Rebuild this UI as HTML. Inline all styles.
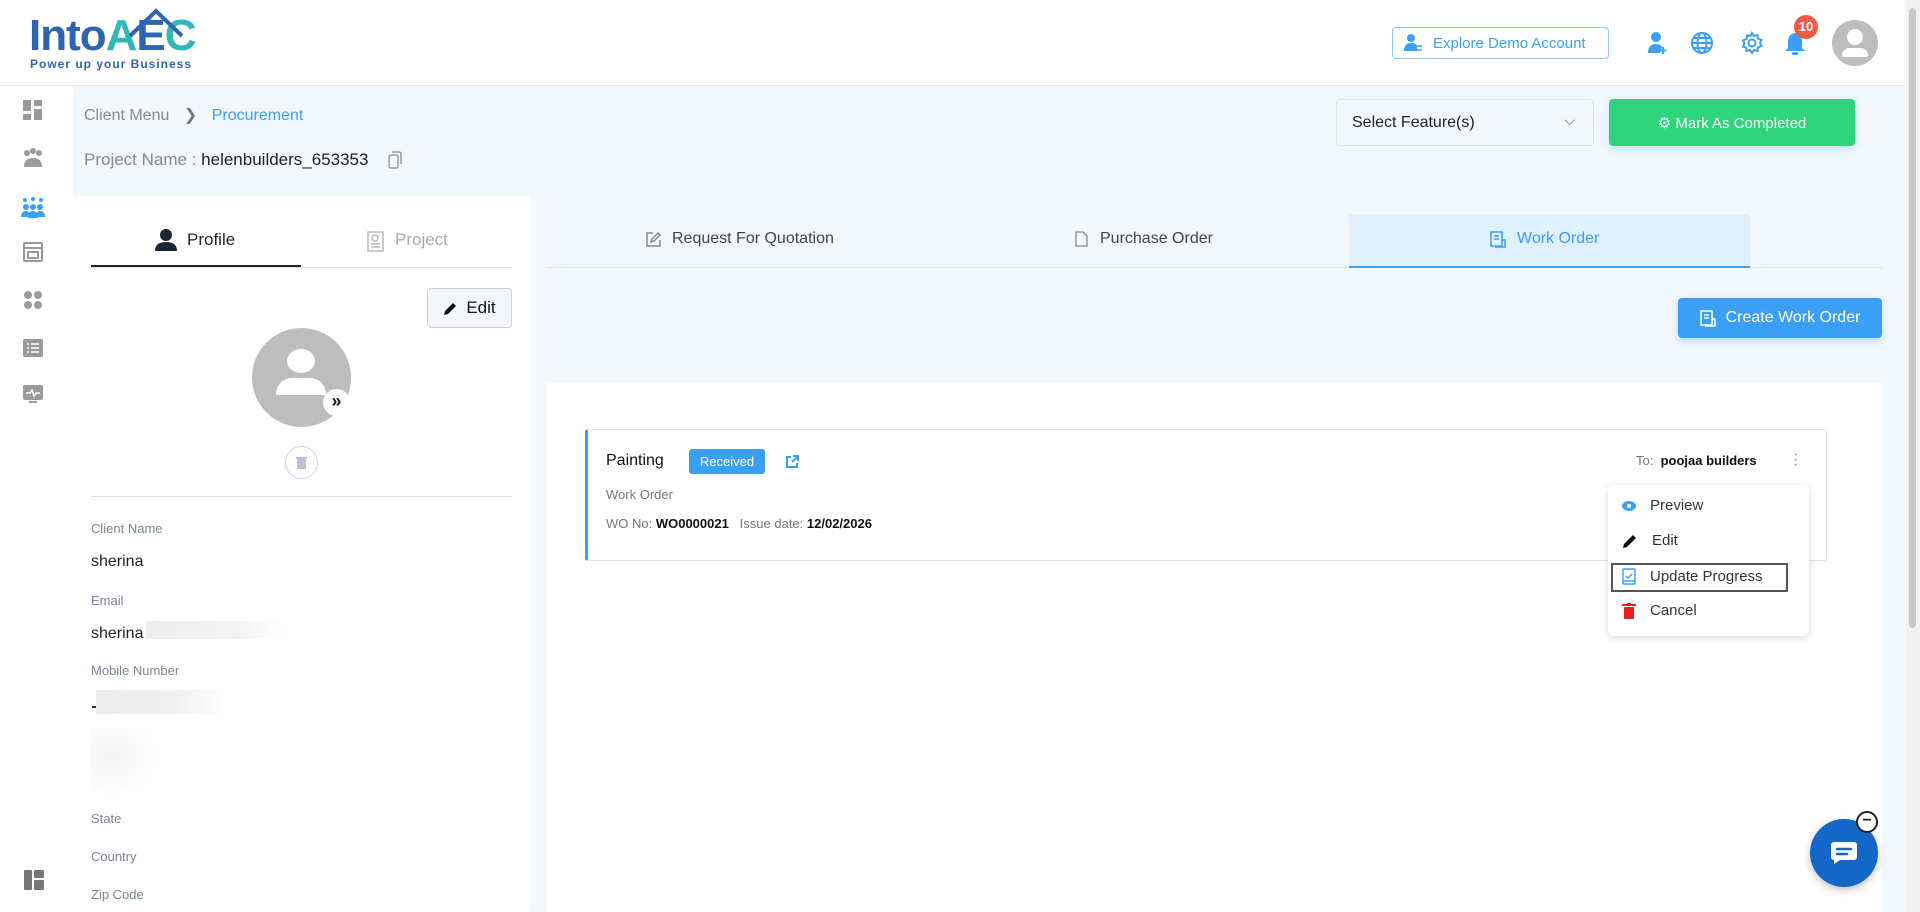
<!DOCTYPE html>
<html><head><meta charset="utf-8">
<style>
*{box-sizing:border-box;margin:0;padding:0}
body{width:1920px;height:912px;overflow:hidden;background:#f3f8fd;font-family:"Liberation Sans",Arial,sans-serif;position:relative;color:#222}
.a{position:absolute}
.hdr{left:0;top:0;width:1904px;height:86px;background:#fff;border-bottom:1px solid #e3e9f0}
.side{left:0;top:86px;width:73px;height:826px;background:#fff}
.lbl{font-size:13px;color:#7a8699;left:91px}
.val{font-size:16px;color:#222;left:91px}
.tab{font-size:16px;color:#444;top:230px}
.mi{left:1622px;font-size:15px;color:#333;display:flex;align-items:center;gap:14px}
</style></head><body>
<div class="a hdr"></div>
<div class="a" style="left:29px;top:14px;font-size:44px;font-weight:bold;color:#2f64b0;letter-spacing:-1px;line-height:44px">Into<span style="color:#2fb9b9">A</span><span style="color:#2f64b0">E</span><span style="color:#2fb9b9">C</span></div>
<svg class="a" style="left:128px;top:8px" width="56" height="30"><path d="M2 28 L28 3 L54 28" fill="none" stroke="#2f64b0" stroke-width="4"/></svg>
<div class="a" style="left:30px;top:57px;font-size:12px;font-weight:bold;color:#2f64b0;letter-spacing:1px">Power up your Business</div>
<div class="a" style="left:1392px;top:27px;width:217px;height:32px;border:1px solid #8cc4f5;border-radius:4px;color:#3a9ff5;font-size:15px;display:flex;align-items:center;padding-left:10px;gap:10px">
<svg width="20" height="20"><circle cx="8" cy="5" r="4" fill="#3a9ff5"/><path d="M1 18 Q1 10 8 10 Q13 10 14 13 L14 18Z" fill="#3a9ff5"/><path d="M14 13h5M14 17h5" stroke="#3a9ff5" stroke-width="1.5"/></svg>Explore Demo Account</div>
<svg class="a" style="left:1646px;top:31px" width="24" height="24"><circle cx="10" cy="6" r="5" fill="#3a9ff5"/><path d="M2 22 Q2 13 10 13 Q15 13 16 16 L14 22Z" fill="#3a9ff5"/><path d="M17 16v7M13.5 19.5h7" stroke="#3a9ff5" stroke-width="2"/></svg>
<svg class="a" style="left:1690px;top:31px" width="24" height="24" fill="none" stroke="#3a9ff5" stroke-width="2"><circle cx="12" cy="12" r="10"/><ellipse cx="12" cy="12" rx="4.5" ry="10"/><path d="M2 12h20M4 7h16M4 17h16"/></svg>
<svg class="a" style="left:1740px;top:31px" width="24" height="24" fill="none" stroke="#3a9ff5" stroke-width="2"><circle cx="12" cy="12" r="3.5"/><path d="M12 2l2 3 3.5-1 .5 3.5 3.5 1.5-1.5 3 1.5 3-3.5 1.5-.5 3.5-3.5-1-2 3-2-3-3.5 1-.5-3.5L3 15.5l1.5-3L3 9.5 6.5 8 7 4.5 10.5 5z"/></svg>
<svg class="a" style="left:1784px;top:31px" width="22" height="26"><path d="M11 2 Q4 3 4 11 L4 17 L1 20 L21 20 L18 17 L18 11 Q18 3 11 2Z" fill="#3a9ff5"/><rect x="8" y="21" width="6" height="3" rx="1.5" fill="#3a9ff5"/></svg>
<div class="a" style="left:1794px;top:15px;width:24px;height:24px;border-radius:50%;background:#f05a4a;color:#fff;font-size:13px;font-weight:bold;text-align:center;line-height:24px">10</div>
<div class="a" style="left:1832px;top:20px;width:46px;height:46px;border-radius:50%;background:#bdbdbd;overflow:hidden"><div class="a" style="left:15px;top:9px;width:16px;height:16px;border-radius:50%;background:#fff"></div><div class="a" style="left:10px;top:28px;width:26px;height:9px;border-radius:9px 9px 2px 2px;background:#fff"></div></div>
<div class="a" style="left:1906px;top:0;width:14px;height:912px;background:#f1f1f1"><div class="a" style="left:3px;top:8px;width:7px;height:620px;background:#c9c9c9;border-radius:4px"></div></div>
<div class="a side"></div>
<svg class="a" style="left:23px;top:100px" width="20" height="20" fill="#9a9a9a"><rect x="0" y="0" width="8" height="11"/><rect x="11" y="0" width="8" height="6"/><rect x="0" y="14" width="8" height="6"/><rect x="11" y="9" width="8" height="11"/></svg>
<svg class="a" style="left:22px;top:147px" width="22" height="22" fill="#9a9a9a"><circle cx="5" cy="6" r="3"/><circle cx="11" cy="4" r="3"/><circle cx="17" cy="6" r="3"/><path d="M2 20 Q2 11 11 11 Q20 11 20 20Z"/></svg>
<svg class="a" style="left:21px;top:197px" width="24" height="22" fill="#3a9ff5"><circle cx="4" cy="3" r="2"/><circle cx="12" cy="2" r="2"/><circle cx="20" cy="3" r="2"/><circle cx="5" cy="10" r="3"/><circle cx="12" cy="10" r="3"/><circle cx="19" cy="10" r="3"/><path d="M0 20 Q0 14 5 14 Q9 14 9 20Z M7 21 Q7 14 12 14 Q17 14 17 21Z M15 20 Q15 14 19 14 Q24 14 24 20Z"/></svg>
<svg class="a" style="left:23px;top:242px" width="20" height="20" fill="none" stroke="#9a9a9a" stroke-width="2"><rect x="1" y="1" width="18" height="18" rx="1"/><path d="M1 6h18M5 10h10v6H5z"/></svg>
<svg class="a" style="left:23px;top:290px" width="20" height="20" fill="#9a9a9a"><circle cx="5" cy="5" r="4"/><circle cx="15" cy="5" r="4"/><circle cx="5" cy="15" r="4"/><circle cx="15" cy="15" r="4"/></svg>
<svg class="a" style="left:23px;top:339px" width="20" height="18" fill="#9a9a9a"><rect width="20" height="18" rx="2"/><path d="M4 5h2M8 5h8M4 9h2M8 9h8M4 13h2M8 13h8" stroke="#fff" stroke-width="1.5"/></svg>
<svg class="a" style="left:23px;top:385px" width="20" height="18" fill="#9a9a9a"><rect width="20" height="15" rx="2"/><path d="M3 8h4l2-3 2 6 2-3h4" stroke="#fff" stroke-width="1.5" fill="none"/><rect x="6" y="16" width="8" height="2"/></svg>
<svg class="a" style="left:24px;top:870px" width="20" height="20" fill="#777"><rect width="8" height="20" rx="1"/><rect x="10" width="10" height="8" rx="1"/><rect x="10" y="10" width="10" height="10" rx="1"/></svg>
<div class="a" style="left:84px;top:105px;font-size:16px;color:#888">Client Menu <span style="margin:0 10px;color:#777">&#x276F;</span> <span style="color:#3a9ff5">Procurement</span></div>
<div class="a" style="left:84px;top:150px;font-size:17px;color:#888">Project Name : <span style="color:#222">helenbuilders_653353</span></div>
<svg class="a" style="left:388px;top:151px" width="14" height="18" fill="none" stroke="#999" stroke-width="1.5"><rect x="1" y="4" width="9" height="13" rx="2"/><path d="M4 1h7a2 2 0 0 1 2 2v10"/></svg>
<div class="a" style="left:1336px;top:99px;width:258px;height:47px;border:1px solid #dbe4ee;border-radius:4px;background:#f3f8fd;font-size:16px;color:#222;padding:14px 15px">Select Feature(s)<span class="a" style="right:18px;top:12px;color:#666;font-size:14px">&#x2335;</span></div>
<div class="a" style="left:1609px;top:99px;width:246px;height:47px;border-radius:4px;background:#2fd47d;color:#fff;font-size:15px;display:flex;align-items:center;justify-content:center;gap:6px;box-shadow:0 4px 10px rgba(47,150,240,.2)">&#x2699; Mark As Completed</div>
<div class="a" style="left:73px;top:196px;width:457px;height:716px;background:#fff;border-radius:4px"></div>
<svg class="a" style="left:155px;top:229px" width="22" height="22" fill="#1c2533"><circle cx="11" cy="6" r="6"/><path d="M0 22 Q0 13 11 13 Q22 13 22 22Z"/></svg>
<div class="a" style="left:187px;top:230px;font-size:17px;color:#1c2533">Profile</div>
<svg class="a" style="left:365px;top:230px" width="20" height="22" fill="none" stroke="#bbb" stroke-width="1.5"><rect x="3" y="2" width="15" height="19"/><circle cx="10" cy="8" r="3"/><path d="M6 14h9M6 17h9"/></svg>
<div class="a" style="left:395px;top:230px;font-size:17px;color:#aaa">Project</div>
<div class="a" style="left:91px;top:267px;width:421px;height:1px;background:#e2e2e2"></div>
<div class="a" style="left:91px;top:265px;width:210px;height:2px;background:#1c2533"></div>
<div class="a" style="left:427px;top:288px;width:85px;height:40px;border:1px solid #c9d3df;border-radius:4px;background:#f3f6fa;font-size:17px;color:#111;display:flex;align-items:center;justify-content:center;gap:8px"><svg width="15" height="15"><path d="M1 14 L2 10 L10 2 L13 5 L5 13Z" fill="#111"/></svg>Edit</div>
<div class="a" style="left:252px;top:328px;width:99px;height:99px;border-radius:50%;background:#bdbdbd;overflow:hidden"><div class="a" style="left:35px;top:21px;width:28px;height:24px;border-radius:50%;background:#fff"></div><div class="a" style="left:24px;top:50px;width:50px;height:17px;border-radius:16px 16px 0 0;background:#fff"></div></div>
<div class="a" style="left:323px;top:389px;width:27px;height:27px;border-radius:50%;background:#fff;text-align:center;line-height:25px;font-size:18px;font-weight:bold;color:#111">&#187;</div>
<div class="a" style="left:285px;top:446px;width:33px;height:33px;border-radius:50%;border:1px solid #cdd6e6;display:flex;align-items:center;justify-content:center"><svg width="11" height="13" fill="#b7c3d6"><rect x="0" y="1" width="11" height="2"/><rect x="1" y="3" width="9" height="10" rx="1"/></svg></div>
<div class="a" style="left:91px;top:496px;width:421px;height:1px;background:#ddd"></div>
<div class="a lbl" style="top:521px">Client Name</div>
<div class="a val" style="top:553px">sherina</div>
<div class="a lbl" style="top:593px">Email</div>
<div class="a val" style="top:625px">sherina</div>
<div class="a" style="left:146px;top:621px;width:140px;height:18px;background:linear-gradient(90deg,#eee,#f2f2f2 60%,#fff)"></div>
<div class="a lbl" style="top:663px">Mobile Number</div>
<div class="a" style="left:92px;top:706px;width:8px;height:2px;background:#333"></div>
<div class="a" style="left:96px;top:690px;width:130px;height:24px;background:linear-gradient(90deg,#ececec,#f0f0f0 60%,#fff)"></div>
<div class="a" style="left:90px;top:728px;width:70px;height:70px;background:radial-gradient(ellipse at 30% 40%,#f3f3f3,#fff 70%)"></div>
<div class="a lbl" style="top:811px">State</div>
<div class="a lbl" style="top:849px">Country</div>
<div class="a lbl" style="top:887px">Zip Code</div>
<div class="a" style="left:1349px;top:214px;width:401px;height:54px;background:#e1f0fd"></div>
<div class="a" style="left:547px;top:267px;width:1335px;height:1px;background:#dde3ea"></div>
<div class="a" style="left:1349px;top:266px;width:401px;height:2px;background:#3a9ff5"></div>
<div class="a tab" style="left:645px;display:flex;gap:10px;align-items:center"><svg width="17" height="17" fill="none" stroke="#888" stroke-width="1.5"><path d="M8 2H2v13h13V9"/><path d="M6 11l1-3 6-6 2 2-6 6z"/></svg>Request For Quotation</div>
<div class="a tab" style="left:1075px;display:flex;gap:12px;align-items:center"><svg width="13" height="16" fill="none" stroke="#888" stroke-width="1.3"><path d="M1 1h7l4 4v10H1z"/></svg>Purchase Order</div>
<div class="a tab" style="left:1490px;display:flex;gap:11px;align-items:center;color:#3a9ff5"><svg width="16" height="17" fill="none" stroke="#3a9ff5" stroke-width="1.5"><rect x="1" y="1" width="11" height="14"/><path d="M4 5h5M4 8h5M12 9h3v7H5"/></svg>Work Order</div>
<div class="a" style="left:1678px;top:298px;width:204px;height:40px;border-radius:4px;background:#3a9ff5;color:#fff;font-size:16px;display:flex;align-items:center;justify-content:center;gap:10px;box-shadow:0 3px 8px rgba(58,159,245,.3)"><svg width="16" height="17" fill="none" stroke="#fff" stroke-width="1.5"><rect x="1" y="1" width="11" height="14"/><path d="M4 5h5M4 8h5M12 9h3v7H5"/></svg>Create Work Order</div>
<div class="a" style="left:547px;top:383px;width:1335px;height:529px;background:#fff"></div>
<div class="a" style="left:585px;top:429px;width:1242px;height:132px;border:1px solid #dde3ea;border-left:3px solid #3a9ff5;border-radius:3px;background:#fff"></div>
<div class="a" style="left:606px;top:452px;font-size:16px;color:#111">Painting</div>
<div class="a" style="left:689px;top:449px;width:76px;height:25px;border-radius:3px;background:#3a9ff5;color:#fff;font-size:13px;text-align:center;line-height:25px">Received</div>
<svg class="a" style="left:786px;top:455px" width="13" height="13" fill="none" stroke="#3a9ff5" stroke-width="2"><path d="M7 1h5v5M12 1L6 7M5 2H1v10h10V8"/></svg>
<div class="a" style="left:606px;top:487px;font-size:13px;color:#777">Work Order</div>
<div class="a" style="left:606px;top:516px;font-size:13px;color:#777">WO No: <b style="color:#111">WO0000021</b> &nbsp; Issue date: <b style="color:#111">12/02/2026</b></div>
<div class="a" style="left:1636px;top:453px;font-size:13px;color:#777">To: &nbsp;<b style="color:#111">poojaa builders</b></div>
<div class="a" style="left:1793px;top:452px;width:4px;font-size:16px;color:#888;line-height:5px">·<br>·<br>·</div>
<div class="a" style="left:1608px;top:485px;width:201px;height:151px;background:#fff;border-radius:5px;box-shadow:0 2px 8px rgba(0,0,0,.15)"></div>
<div class="a mi" style="top:497px"><svg width="14" height="14"><ellipse cx="7" cy="7" rx="7" ry="5" fill="#3a9ff5"/><circle cx="7" cy="7" r="2" fill="#fff"/></svg>Preview</div>
<div class="a mi" style="top:532px"><svg width="16" height="16"><path d="M1 15 L2 11 L11 2 L14 5 L5 14Z" fill="#111"/></svg>Edit</div>
<div class="a" style="left:1611px;top:563px;width:177px;height:29px;border:2px solid #555"></div>
<div class="a mi" style="top:568px"><svg width="14" height="17" fill="none" stroke="#3a9ff5" stroke-width="1.4"><rect x="1" y="1" width="12" height="15" rx="1"/><path d="M4 8l2 2 4-4M1 13h12"/></svg>Update Progress</div>
<div class="a mi" style="top:602px"><svg width="14" height="16" fill="#e81d1d"><rect x="0" y="1" width="14" height="2"/><rect x="5" y="0" width="4" height="2"/><rect x="2" y="4" width="10" height="12" rx="1"/></svg>Cancel</div>
<div class="a" style="left:1810px;top:819px;width:68px;height:68px;border-radius:50%;background:#1466c7;box-shadow:0 3px 8px rgba(0,0,0,.25);display:flex;align-items:center;justify-content:center"><svg width="28" height="24"><path d="M4 1h20a3 3 0 0 1 3 3v12a3 3 0 0 1-3 3H10l-6 4v-4a3 3 0 0 1-3-3V4a3 3 0 0 1 3-3z" fill="#fff"/><path d="M7 8h14M7 13h10" stroke="#1466c7" stroke-width="2.5" stroke-linecap="round"/></svg></div>
<div class="a" style="left:1856px;top:811px;width:22px;height:22px;border-radius:50%;background:#fff;border:2px solid #222;text-align:center;line-height:16px;font-weight:bold;font-size:16px">−</div>
</body></html>
